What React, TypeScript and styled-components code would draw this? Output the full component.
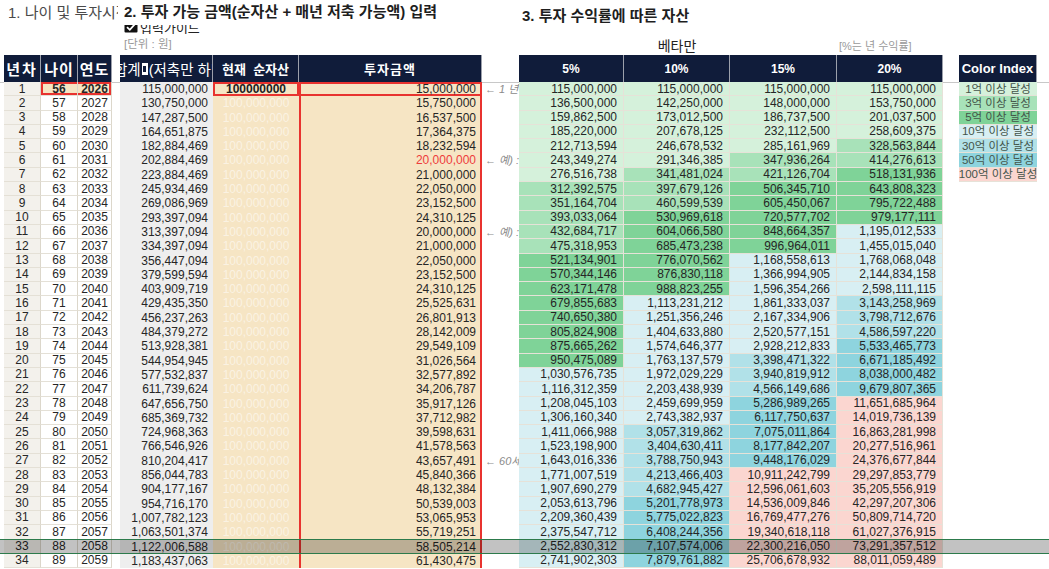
import styled, { createGlobalStyle, css } from 'styled-components';

const GlobalStyle = createGlobalStyle`
  html, body {
    margin: 0;
    padding: 0;
    background: #fff;
    overflow: hidden;
  }
  body {
    font-family: "Liberation Sans", "Noto Sans CJK KR", sans-serif;
    color: #262626;
  }
`;

const NAVY = '#101c3a';
const BEIGE = '#f6e5c4';
const RED = '#e8332f';
const ROW_H = 14.3;

const RATES = [0.05, 0.1, 0.15, 0.2];
const RATE_W = [105, 106, 107, 106];

type RowData = {
  n: number;
  age: number;
  year: number;
  sum: number;
  invest: number;
  values: number[];
};

// the sheet rounds every yearly figure before carrying it forward
function buildRows(): RowData[] {
  const rows: RowData[] = [];
  let sum = 100000000;
  let invest = 0;
  let values = [0, 0, 0, 0];
  for (let n = 1; n <= 34; n++) {
    if (n === 1) invest = 15000000;
    else if (n === 6 || n === 11) invest = 20000000;
    else invest = Math.round(invest * 1.05);
    sum += invest;
    values =
      n === 1
        ? RATES.map(() => 100000000 + invest)
        : values.map((v, i) => Math.round(v * (1 + RATES[i]) + invest));
    rows.push({ n, age: 55 + n, year: 2025 + n, sum, invest, values });
  }
  return rows;
}

const fmt = (v: number) => Math.round(v).toLocaleString('en-US');

const TIERS = [
  { min: 1e10, bg: '#fbd6d0', label: '100억 이상 달성' },
  { min: 5e9, bg: '#8ed4de', label: '50억 이상 달성' },
  { min: 3e9, bg: '#b1e1e8', label: '30억 이상 달성' },
  { min: 1e9, bg: '#d8eff3', label: '10억 이상 달성' },
  { min: 5e8, bg: '#7fd398', label: '5억 이상 달성' },
  { min: 3e8, bg: '#a8e2b9', label: '3억 이상 달성' },
  { min: 1e8, bg: '#d5f1db', label: '1억 이상 달성' },
];
const LEGEND = [...TIERS].reverse();
const tierColor = (v: number) => (TIERS.find((t) => v >= t.min) ?? TIERS[6]).bg;

const NOTES: Record<number, string> = {
  1: '← 1 년',
  6: '← 예) :',
  11: '← 예) :',
  27: '← 60세',
};

const redBox = (sides = '') => {
  const s: string[] = [];
  if (sides.includes('l')) s.push(`inset 2px 0 0 ${RED}`);
  if (sides.includes('r')) s.push(`inset -2px 0 0 ${RED}`);
  if (sides.includes('t')) s.push(`inset 0 2px 0 ${RED}`);
  if (sides.includes('b')) s.push(`inset 0 -2px 0 ${RED}`);
  return s.length ? `box-shadow: ${s.join(', ')};` : '';
};

const Page = styled.div`
  width: 1049px;
  height: 569px;
  overflow: hidden;
`;

/* ---------- top titles ---------- */

const TopArea = styled.div`
  display: flex;
  height: 55px;
`;

const LeftHead = styled.div`
  width: 118px;
  margin-right: 2px;
  box-sizing: border-box;
  padding: 4px 0 0 8px;
  overflow: hidden;
  white-space: nowrap;
  font-size: 15px;
  line-height: 17px;
  color: #4a4a4a;
`;

const MidHead = styled.div`
  width: 399px;
  box-sizing: border-box;
  padding-left: 4px;
  display: flex;
  flex-direction: column;
`;

const RightHead = styled.div`
  width: 424px;
  box-sizing: border-box;
  padding-left: 3px;
  display: flex;
  flex-direction: column;
`;

const Title = styled.div<{ $top: number }>`
  margin-top: ${(p) => p.$top}px;
  font-size: 15px;
  line-height: 18px;
  font-weight: bold;
  color: #1e1e1e;
  white-space: nowrap;
`;

const GuideClip = styled.div`
  height: 9px;
  margin-top: 4px;
  overflow: hidden;
`;

const GuideLine = styled.div`
  margin-top: -5px;
  height: 14px;
  display: flex;
  align-items: center;
  gap: 2px;
  font-size: 13px;
  color: #222;
`;

const Unit = styled.div`
  margin-top: 4px;
  font-size: 11.5px;
  line-height: 13px;
  color: #9a9a9a;
`;

const SubRow = styled.div`
  display: grid;
  grid-template-columns: ${RATE_W.map((w) => `${w}px`).join(' ')};
  margin-top: 13px;
  margin-left: -3px;
  line-height: 17px;
`;

const SubLabel = styled.div<{ $col: number; $muted?: boolean }>`
  grid-column: ${(p) => p.$col};
  text-align: ${(p) => (p.$muted ? 'left' : 'center')};
  padding-left: ${(p) => (p.$muted ? '2px' : '0')};
  font-size: ${(p) => (p.$muted ? '11px' : '14px')};
  color: ${(p) => (p.$muted ? '#9a9a9a' : '#222')};
  white-space: nowrap;
`;

/* ---------- header ---------- */

const HeaderRow = styled.div`
  display: flex;
  height: 27px;
  box-shadow: 0 1px 0 #c8c8c8;
  position: relative;
`;

const Spacer = styled.div<{ $w: number }>`
  width: ${(p) => p.$w}px;
  flex: none;
`;

const HeadCell = styled.div<{ $w: number; $size?: number; $spacing?: number; $start?: boolean; $weight?: string }>`
  width: ${(p) => p.$w}px;
  flex: none;
  box-sizing: border-box;
  background: ${NAVY};
  border-right: 1px solid #9ca0ab;
  color: #fff;
  display: flex;
  align-items: center;
  justify-content: ${(p) => (p.$start ? 'flex-start' : 'center')};
  overflow: hidden;
  white-space: nowrap;
  font-size: ${(p) => p.$size ?? 12}px;
  font-weight: ${(p) => p.$weight ?? 'bold'};
  letter-spacing: ${(p) => p.$spacing ?? 0}px;
`;

const ClippedLabel = styled.span`
  margin-left: -6px;
  display: flex;
  align-items: center;
`;

const BreakMark = styled.span`
  display: inline-block;
  width: 6px;
  height: 12px;
  margin: 0 1px;
  background: #fff;
  position: relative;
  &::before {
    content: '';
    position: absolute;
    left: 1.5px;
    top: 3px;
    width: 3px;
    height: 6px;
    background: ${NAVY};
  }
`;

/* ---------- data rows ---------- */

const DataRow = styled.div<{ $selected?: boolean }>`
  display: flex;
  height: ${ROW_H}px;
  position: relative;
  font-size: 12px;
  ${(p) =>
    p.$selected &&
    css`
      &::after {
        content: '';
        position: absolute;
        left: 0;
        right: 0;
        top: -1px;
        bottom: 0;
        background: rgba(0, 0, 0, 0.24);
        border-top: 1.5px solid #2c7a4b;
        border-bottom: 1.5px solid #2c7a4b;
        pointer-events: none;
      }
    `}
`;

const baseCell = css<{ $w: number }>`
  width: ${(p) => p.$w}px;
  flex: none;
  box-sizing: border-box;
  display: flex;
  align-items: center;
  white-space: nowrap;
  overflow: hidden;
  line-height: ${ROW_H}px;
`;

const YearCell = styled.div<{ $w: number }>`
  ${baseCell};
  justify-content: center;
  background: #f3f1ec;
  border-right: 1px solid #dcd7cb;
  border-bottom: 1px solid #e4e0d6;
`;

const AgeCell = styled.div<{ $w: number; $first?: boolean; $red?: string }>`
  ${baseCell};
  justify-content: center;
  background: ${(p) => (p.$first ? BEIGE : '#fff')};
  font-weight: ${(p) => (p.$first ? 'bold' : 'normal')};
  border-right: 1px solid #dcd7cb;
  border-bottom: 1px solid #e4e0d6;
  ${(p) => redBox(p.$red)};
`;

const SumCell = styled.div<{ $w: number }>`
  ${baseCell};
  justify-content: flex-end;
  padding-right: 5px;
  background: #eeeeee;
`;

const NetCell = styled.div<{ $w: number; $first?: boolean }>`
  ${baseCell};
  justify-content: center;
  background: ${BEIGE};
  color: ${(p) => (p.$first ? '#1e1e1e' : 'rgba(255, 255, 255, 0.55)')};
  font-weight: ${(p) => (p.$first ? 'bold' : 'normal')};
  ${(p) => (p.$first ? redBox('lrtb') : '')};
`;

const InvestCell = styled.div<{ $w: number; $first?: boolean; $alert?: boolean }>`
  ${baseCell};
  justify-content: flex-end;
  padding-right: 6px;
  background: ${BEIGE};
  color: ${(p) => (p.$alert ? '#ee3b3b' : '#262626')};
  ${(p) => redBox(p.$first ? 'lrtb' : 'lr')};
`;

const NoteCell = styled.div<{ $w: number }>`
  ${baseCell};
  padding-left: 3px;
  font-size: 11px;
  font-style: italic;
  color: #8a8a8a;
`;

const RateCell = styled.div<{ $w: number; $bg: string }>`
  ${baseCell};
  justify-content: flex-end;
  padding-right: 6px;
  background: ${(p) => p.$bg};
  border-right: 1px solid #e6e2d8;
  border-bottom: 1px solid #e6e2d8;
  color: #262626;
`;

const LegendCell = styled.div<{ $w: number; $bg?: string }>`
  ${baseCell};
  overflow: visible;
  justify-content: center;
  background: ${(p) => p.$bg ?? 'transparent'};
  border-bottom: 1px solid ${(p) => (p.$bg ? '#e6e2d8' : 'transparent')};
  font-size: 11.5px;
  color: #44544a;
`;

function CheckIcon() {
  return (
    <svg width="14" height="12" viewBox="0 0 14 12">
      <rect x="0.5" y="0.5" width="13" height="11" rx="1" fill="#111" />
      <path d="M3 6.2 L5.8 8.8 L11 3" stroke="#fff" strokeWidth="1.8" fill="none" />
    </svg>
  );
}

const rows = buildRows();

export default function App() {
  return (
    <>
      <GlobalStyle />
      <Page>
        <TopArea>
          <LeftHead>1. 나이 및 투자시점 입력</LeftHead>
          <MidHead>
            <Title $top={3}>2. 투자 가능 금액(순자산 + 매년 저축 가능액) 입력</Title>
            <GuideClip>
              <GuideLine>
                <CheckIcon />
                입력가이드
              </GuideLine>
            </GuideClip>
            <Unit>[단위 : 원]</Unit>
          </MidHead>
          <RightHead>
            <Title $top={7}>3. 투자 수익률에 따른 자산</Title>
            <SubRow>
              <SubLabel $col={2}>베타만</SubLabel>
              <SubLabel $col={4} $muted>
                [%는 년 수익률]
              </SubLabel>
            </SubRow>
          </RightHead>
        </TopArea>

        <HeaderRow>
          <Spacer $w={4} />
          <HeadCell $w={37} $size={15} $spacing={2}>
            년차
          </HeadCell>
          <HeadCell $w={37} $size={15} $spacing={1}>
            나이
          </HeadCell>
          <HeadCell $w={34} $size={15} $spacing={1}>
            연도
          </HeadCell>
          <Spacer $w={8} />
          <HeadCell $w={93} $size={14.5} $start $weight="normal">
            <ClippedLabel>
              합계
              <BreakMark />
              (저축만 하면)
            </ClippedLabel>
          </HeadCell>
          <HeadCell $w={86} $size={13}>
            현재&nbsp;&nbsp;순자산
          </HeadCell>
          <HeadCell $w={183} $size={13} $spacing={1}>
            투자금액
          </HeadCell>
          <Spacer $w={37} />
          {RATES.map((r, i) => (
            <HeadCell key={r} $w={RATE_W[i]}>
              {Math.round(r * 100)}%
            </HeadCell>
          ))}
          <Spacer $w={16} />
          <HeadCell $w={78} $size={13}>
            Color Index
          </HeadCell>
        </HeaderRow>

        {rows.map((r) => {
          const first = r.n === 1;
          const legend = LEGEND[r.n - 1];
          return (
            <DataRow key={r.n} $selected={r.n === 33}>
              <Spacer $w={4} />
              <YearCell $w={37}>{r.n}</YearCell>
              <AgeCell $w={37} $first={first} $red={first ? 'ltb' : ''}>
                {r.age}
              </AgeCell>
              <AgeCell $w={34} $first={first} $red={first ? 'rtb' : ''}>
                {r.year}
              </AgeCell>
              <Spacer $w={8} />
              <SumCell $w={93}>{fmt(r.sum)}</SumCell>
              <NetCell $w={86} $first={first}>
                {first ? '100000000' : '100,000,000'}
              </NetCell>
              <InvestCell $w={183} $first={first} $alert={r.n === 6}>
                {fmt(r.invest)}
              </InvestCell>
              <NoteCell $w={37}>{NOTES[r.n] ?? ''}</NoteCell>
              {r.values.map((v, i) => (
                <RateCell key={i} $w={RATE_W[i]} $bg={tierColor(v)}>
                  {fmt(v)}
                </RateCell>
              ))}
              <Spacer $w={16} />
              <LegendCell $w={78} $bg={legend?.bg}>
                {legend?.label ?? ''}
              </LegendCell>
            </DataRow>
          );
        })}
      </Page>
    </>
  );
}
